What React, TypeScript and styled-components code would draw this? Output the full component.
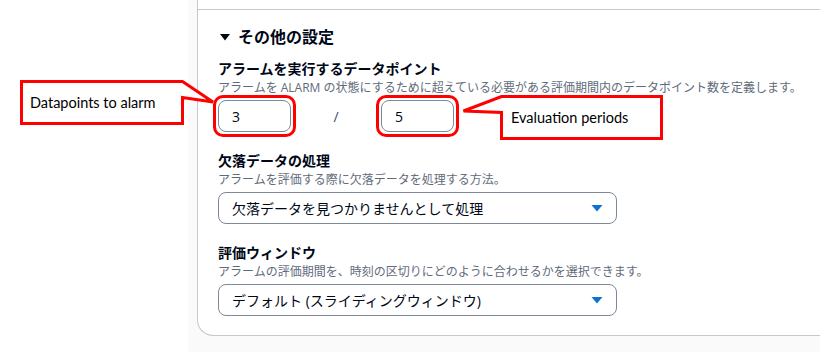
import React from "react";
import styled, { createGlobalStyle } from "styled-components";

const GlobalStyle = createGlobalStyle`
  html, body {
    margin: 0;
    padding: 0;
    background: #ffffff;
    overflow: hidden;
  }
  body {
    font-family: "Open Sans", "Noto Sans CJK JP", sans-serif;
    color: #000716;
  }
  * { box-sizing: border-box; }
`;

const Page = styled.div`
  position: relative;
  display: flex;
  width: 820px;
  height: 352px;
  overflow: hidden;
`;

const Gutter = styled.div`
  width: 188px;
  flex: none;
  background: #ffffff;
`;

const Main = styled.div`
  flex: 1;
  background: #fafafa;
  padding-left: 9px;
  min-width: 0;
`;

const Card = styled.div`
  background: #ffffff;
  border-left: 1px solid #c6c6cd;
  border-bottom: 1px solid #c6c6cd;
  border-bottom-left-radius: 16px;
  margin-right: -30px;
`;

const PrevSection = styled.div`
  height: 10px;
  border-bottom: 1px solid #c6c6cd;
`;

const Section = styled.section`
  padding: 17px 20px 19px 20px;
  display: flex;
  flex-direction: column;
  gap: 20px;
`;

const Heading = styled.h2`
  margin: 0 0 -7px 0;
  display: flex;
  align-items: center;
  gap: 7px;
  font-size: 16px;
  line-height: 20px;
  font-weight: 700;
  color: #000716;
  padding-left: 1px;
`;

const Field = styled.div`
  display: flex;
  flex-direction: column;
`;

const Label = styled.div`
  font-size: 14px;
  line-height: 18px;
  font-weight: 700;
  color: #000716;
`;

const Description = styled.div`
  margin-top: 2px;
  font-size: 12px;
  line-height: 16px;
  color: #5f6b7a;
  white-space: nowrap;
`;

const Control = styled.div`
  margin-top: 4px;
  display: flex;
  align-items: center;
`;

const Highlight = styled.div`
  margin: -5px;
  padding: 2px;
  border: 3px solid #ff0000;
  border-radius: 10px;
  display: flex;
`;

const NumberBox = styled.div`
  width: 73px;
  height: 32px;
  border: 1px solid #7d8998;
  border-radius: 8px;
  padding-left: 13px;
  display: flex;
  align-items: center;
  font-size: 14px;
  color: #000716;
`;

const Slash = styled.div`
  width: 90px;
  text-align: center;
  font-size: 14px;
  color: #414d5c;
`;

const Select = styled.div`
  width: 399px;
  height: 32px;
  border: 1px solid #7d8998;
  border-radius: 8px;
  padding: 0 13px 0 13px;
  display: flex;
  align-items: center;
  justify-content: space-between;
  font-size: 14px;
  color: #000716;
`;

const Callout = styled.div<{ $left: number; $top: number; $w: number; $h: number }>`
  position: absolute;
  left: ${(p) => p.$left}px;
  top: ${(p) => p.$top}px;
  width: ${(p) => p.$w}px;
  height: ${(p) => p.$h}px;
`;

const CalloutText = styled.span<{ $x: number; $y: number }>`
  position: absolute;
  left: ${(p) => p.$x}px;
  top: ${(p) => p.$y}px;
  font-family: Lato, "Open Sans", sans-serif;
  font-size: 14.5px;
  line-height: 18px;
  color: #000000;
  white-space: nowrap;
`;

const CalloutSvg = styled.svg`
  position: absolute;
  left: 0;
  top: 0;
  overflow: visible;
`;

const Caret = () => (
  <svg width="12" height="12" viewBox="0 0 12 12">
    <polygon points="0.5,3 11.5,3 6,9.5" fill="#0972d3" />
  </svg>
);

const HeadingCaret = () => (
  <svg width="12" height="12" viewBox="0 0 12 12">
    <polygon points="1,3 11,3 6,9.5" fill="#000716" />
  </svg>
);

export default function App() {
  return (
    <>
      <GlobalStyle />
      <Page>
        <Gutter />
        <Main>
          <Card>
            <PrevSection />
            <Section>
              <Heading>
                <HeadingCaret />
                その他の設定
              </Heading>
              <Field>
                <Label>アラームを実行するデータポイント</Label>
                <Description>
                  アラームを ALARM の状態にするために超えている必要がある評価期間内のデータポイント数を定義します。
                </Description>
                <Control>
                  <Highlight>
                    <NumberBox>3</NumberBox>
                  </Highlight>
                  <Slash>/</Slash>
                  <Highlight>
                    <NumberBox>5</NumberBox>
                  </Highlight>
                </Control>
              </Field>
              <Field>
                <Label>欠落データの処理</Label>
                <Description>アラームを評価する際に欠落データを処理する方法。</Description>
                <Control>
                  <Select>
                    <span>欠落データを見つかりませんとして処理</span>
                    <Caret />
                  </Select>
                </Control>
              </Field>
              <Field>
                <Label>評価ウィンドウ</Label>
                <Description>
                  アラームの評価期間を、時刻の区切りにどのように合わせるかを選択できます。
                </Description>
                <Control>
                  <Select>
                    <span>デフォルト (スライディングウィンドウ)</span>
                    <Caret />
                  </Select>
                </Control>
              </Field>
            </Section>
          </Card>
        </Main>

        <Callout $left={18} $top={78} $w={200} $h={50}>
          <CalloutSvg width="200" height="50" viewBox="0 0 200 50">
            <path
              d="M3.5 3.5 H164.5 L195 24 L164.5 19.5 V45.5 H3.5 Z"
              fill="#ffffff"
              stroke="#ff0000"
              strokeWidth="3"
              strokeLinejoin="miter"
            />
          </CalloutSvg>
          <CalloutText $x={12} $y={16}>Datapoints to alarm</CalloutText>
        </Callout>

        <Callout $left={460} $top={93} $w={206} $h={49}>
          <CalloutSvg width="206" height="49" viewBox="0 0 206 49">
            <path
              d="M41.5 3.5 H201.5 V45.5 H41.5 V19.5 L3.5 18 Z"
              fill="#ffffff"
              stroke="#ff0000"
              strokeWidth="3"
              strokeLinejoin="miter"
            />
          </CalloutSvg>
          <CalloutText $x={51} $y={16}>Evaluation periods</CalloutText>
        </Callout>
      </Page>
    </>
  );
}
